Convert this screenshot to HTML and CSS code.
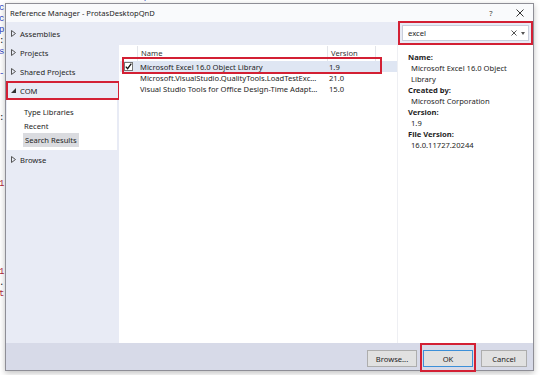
FILE: index.html
```html
<!DOCTYPE html>
<html lang="en">
<head>
    <meta charset="UTF-8">
    <title>Reference Manager</title>
    <link rel="stylesheet" href="styles.css">
</head>
<body>
    <!-- code editor behind the dialog: only its edges show -->
    <div class="editor-top">
        <pre class="code"><span class="k">rosoft.com/winfx/2006/xaml/presentation"</span></pre>
    </div>
    <div class="editor-left">
        <pre class="code">
<span class="k">c</span>
<span class="k">c</span>
<span class="k">p</span>
<span class="d">:</span>
<span class="k">s</span>

<span class="k">-</span>



<span class="d">:</span>





<span class="r">1</span>







<span class="r">1</span>
<span class="d">.</span>
<span class="r">t</span>
</pre>
    </div>

    <div class="dialog">
        <div class="titlebar">
            <span class="title">Reference Manager - ProtasDesktopQnD</span>
            <span class="help">?</span>
            <span class="close">
                <svg width="8" height="8" viewBox="0 0 8 8"><path d="M0.5 0.5 L7.5 7.5 M7.5 0.5 L0.5 7.5" stroke="#333" stroke-width="1"/></svg>
            </span>
        </div>

        <div class="body">
            <!-- left tree -->
            <div class="nav">
                <div class="node"><svg class="arrow" width="5" height="7" viewBox="0 0 5 7"><path d="M0.5 0.5 L4.5 3.5 L0.5 6.5 Z" fill="none" stroke="#555"/></svg>Assemblies</div>
                <div class="node"><svg class="arrow" width="5" height="7" viewBox="0 0 5 7"><path d="M0.5 0.5 L4.5 3.5 L0.5 6.5 Z" fill="none" stroke="#555"/></svg>Projects</div>
                <div class="node"><svg class="arrow" width="5" height="7" viewBox="0 0 5 7"><path d="M0.5 0.5 L4.5 3.5 L0.5 6.5 Z" fill="none" stroke="#555"/></svg>Shared Projects</div>
                <div class="node mark"><svg class="arrow" width="5" height="7" viewBox="0 0 5 7"><path d="M5 1 L5 6 L0 6 Z" fill="#333"/></svg>COM</div>
                <div class="subnodes">
                    <div class="sub">Type Libraries</div>
                    <div class="sub">Recent</div>
                    <div class="sub"><span class="current">Search Results</span></div>
                </div>
                <div class="node"><svg class="arrow" width="5" height="7" viewBox="0 0 5 7"><path d="M0.5 0.5 L4.5 3.5 L0.5 6.5 Z" fill="none" stroke="#555"/></svg>Browse</div>
            </div>

            <!-- result list -->
            <div class="center">
                <div class="toolbar"></div>
                <div class="list">
                    <div class="row head">
                        <span class="c-check"></span>
                        <span class="c-name">Name</span>
                        <span class="c-ver">Version</span>
                        <span class="c-rest"></span>
                    </div>
                    <div class="row selected">
                        <span class="c-check">
                            <svg width="9" height="9" viewBox="0 0 9 9"><rect x="0.5" y="0.5" width="8" height="8" fill="#fff" stroke="#777"/><path d="M1.8 4.6 L3.6 6.6 L7.3 1.6" fill="none" stroke="#111" stroke-width="1.3"/></svg>
                        </span>
                        <span class="c-name">Microsoft Excel 16.0 Object Library</span>
                        <span class="c-ver">1.9</span>
                        <span class="c-rest"></span>
                    </div>
                    <div class="row">
                        <span class="c-check"></span>
                        <span class="c-name">Microsoft.VisualStudio.QualityTools.LoadTestExc...</span>
                        <span class="c-ver">21.0</span>
                        <span class="c-rest"></span>
                    </div>
                    <div class="row">
                        <span class="c-check"></span>
                        <span class="c-name">Visual Studio Tools for Office Design-Time Adapt...</span>
                        <span class="c-ver">15.0</span>
                        <span class="c-rest"></span>
                    </div>
                </div>
            </div>

            <!-- search and details -->
            <div class="side">
                <div class="search">
                    <div class="search-box">
                        <span class="query">excel</span>
                        <svg class="clear" width="6" height="6" viewBox="0 0 6 6"><path d="M0.5 0.5 L5.5 5.5 M5.5 0.5 L0.5 5.5" stroke="#555" stroke-width="1"/></svg>
                        <svg class="drop" width="4" height="3" viewBox="0 0 4 3"><path d="M0 0 L4 0 L2 3 Z" fill="#555"/></svg>
                    </div>
                </div>
                <div class="details">
                    <div class="label">Name:</div>
                    <div class="value">Microsoft Excel 16.0 Object Library</div>
                    <div class="label">Created by:</div>
                    <div class="value">Microsoft Corporation</div>
                    <div class="label">Version:</div>
                    <div class="value">1.9</div>
                    <div class="label">File Version:</div>
                    <div class="value">16.0.11727.20244</div>
                </div>
            </div>
        </div>

        <div class="footer">
            <button class="btn">Browse...</button>
            <button class="btn default">OK</button>
            <button class="btn cancel">Cancel</button>
        </div>
    </div>
</body>
</html>
```

FILE: styles.css
```css
/* Reference Manager dialog over the editor */
body {
    margin: 0;
    width: 540px;
    height: 375px;
    overflow: hidden;
    position: relative;
    background-color: #fff;
    font-family: "Noto Sans", "Open Sans", sans-serif;
    color: #1e1e1e;
}

.editor-top {
    position: absolute;
    top: 0;
    left: 0;
    width: 540px;
    height: 3px;
    overflow: hidden;
}

.editor-top .code {
    margin: -8px 0 0 -2px;
}

.editor-left {
    position: absolute;
    top: 3px;
    left: 0;
    width: 5px;
    height: 372px;
    overflow: hidden;
}

.editor-left .code {
    margin-left: -1px;
}

.code {
    margin: 0;
    font-family: "Liberation Mono", monospace;
    font-size: 9px;
    line-height: 11px;
    color: #333;
}

.code .k {
    color: #3346c4;
}

.code .r {
    color: #b0283a;
}

.code .d {
    color: #222;
}

/* window */
.dialog {
    position: absolute;
    left: 5px;
    top: 3px;
    width: 527px;
    height: 366px;
    border: 1px solid #8e8e96;
    background-color: #fff;
    display: flex;
    flex-direction: column;
    box-shadow: 0 2px 6px rgba(0, 0, 0, 0.25);
}

.titlebar {
    height: 18px;
    display: flex;
    align-items: center;
    background-color: #f9fafc;
    font-size: 7.6px;
}

.title {
    flex: 1;
    padding-left: 4px;
}

.help {
    width: 10px;
    text-align: center;
    margin-right: 20px;
    color: #444;
}

.close {
    width: 8px;
    height: 8px;
    display: flex;
    margin-right: 9px;
}

.body {
    flex: 1;
    display: flex;
    font-size: 7.6px;
}

/* tree */
.nav {
    width: 113px;
    background-color: #e8ebf5;
    padding-top: 2px;
}

.node {
    height: 19px;
    display: flex;
    align-items: center;
    padding-left: 5px;
    box-sizing: border-box;
}

.arrow {
    margin-right: 4px;
}

.node.mark {
    border: 2px solid #d32034;
    padding-left: 3px;
    margin-right: -1px;
}

.subnodes {
    background-color: #fff;
    margin: 0 2px 0 1px;
    padding: 5px 0 3px;
}

.sub {
    height: 14px;
    display: flex;
    align-items: center;
    padding-left: 17px;
}

.current {
    background-color: #dadbdf;
    padding: 0 2px;
    margin-left: -1px;
    line-height: 14px;
}

/* list */
.center {
    width: 279px;
    display: flex;
    flex-direction: column;
}

.toolbar {
    height: 23px;
    background-color: #e8ebf5;
}

.list {
    flex: 1;
    background-color: #fff;
    padding: 1px 0 0 1px;
    border-right: 1px solid #eeeff3;
}

.row {
    display: flex;
    height: 11px;
    align-items: center;
    position: relative;
}

.row.head {
    height: 15px;
    color: #333;
}

.row.head span {
    height: 15px;
    line-height: 15px;
    border-right: 1px solid #e3e5ea;
}

.c-check {
    width: 17px;
    display: flex;
    align-items: center;
    justify-content: center;
}

.c-name {
    width: 186px;
    padding-left: 3px;
    white-space: nowrap;
    overflow: hidden;
}

.c-ver {
    width: 44px;
    padding-left: 3px;
}

.c-rest {
    flex: 1;
}

.row.head .c-rest {
    border-right: none;
}

.row.selected {
    background-color: #dfe6f3;
}

.row.selected::after {
    content: "";
    position: absolute;
    left: 2px;
    right: 15px;
    top: -4px;
    bottom: -2px;
    border: 2px solid #d32034;
}

/* search and details */
.side {
    flex: 1;
    display: flex;
    flex-direction: column;
}

.search {
    height: 24px;
    margin-top: -1px;
    border: 2px solid #d32034;
    box-sizing: border-box;
    padding: 2px;
    background-color: #e8ebf5;
}

.search-box {
    height: 100%;
    background-color: #fff;
    border: 1px solid #c9cedb;
    box-sizing: border-box;
    display: flex;
    align-items: center;
    padding: 0 3px 0 5px;
}

.query {
    flex: 1;
}

.clear {
    margin-right: 4px;
}

.details {
    flex: 1;
    padding: 7px 0 0 10px;
    line-height: 11px;
}

.label {
    font-weight: bold;
}

.value {
    padding-left: 3px;
    width: 105px;
}

/* buttons */
.footer {
    height: 27px;
    background-color: #d7dae8;
    display: flex;
    justify-content: flex-end;
    align-items: flex-start;
    padding: 7px 6px 0 0;
    box-sizing: border-box;
    gap: 6px;
}

.btn {
    width: 50px;
    height: 17px;
    padding: 0;
    font-family: inherit;
    font-size: 7.6px;
    color: #1e1e1e;
    background-color: #e1e1e1;
    border: 1px solid #adadad;
    position: relative;
}

.btn.default {
    border-color: #3c8fd8;
}

.btn.default::after {
    content: "";
    position: absolute;
    left: -4px;
    right: -4px;
    top: -8px;
    bottom: -6px;
    border: 2px solid #d32034;
}

.btn.cancel {
    margin-left: 2px;
    width: 46px;
}
```
